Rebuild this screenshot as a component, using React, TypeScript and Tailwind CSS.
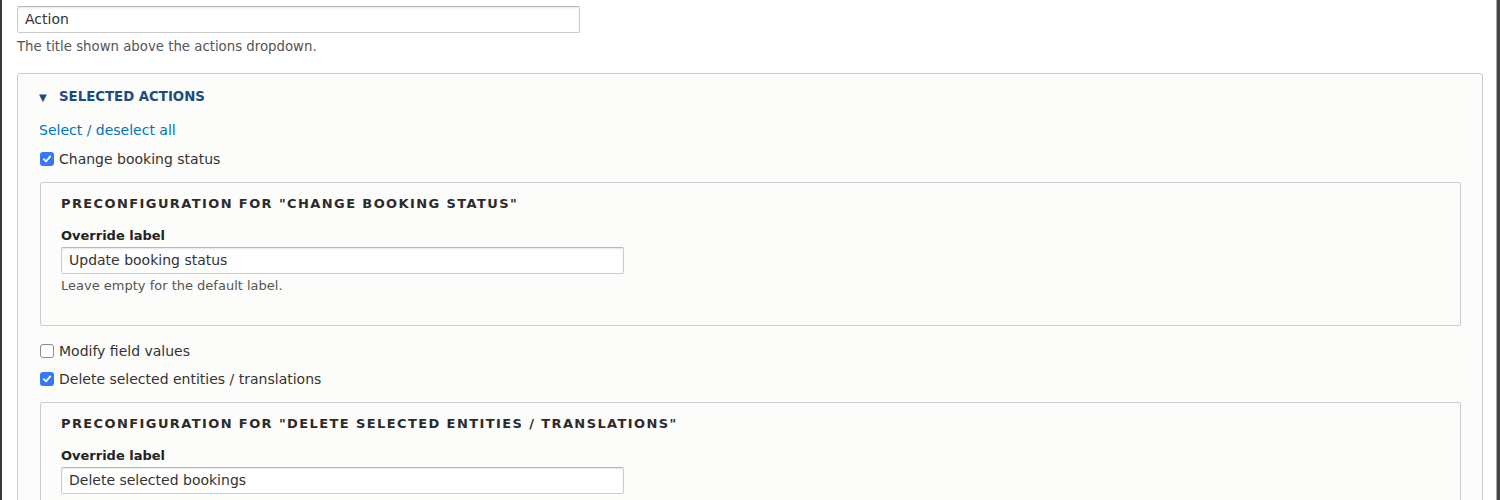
const font = { fontFamily: '"DejaVu Sans", "Liberation Sans", sans-serif' };

function TextInput({ value, className = "" }: { value: string; className?: string }) {
  return (
    <div
      className={`h-[27px] flex items-center px-[7px] bg-white border border-[#ccc] border-t-[#b8b8b8] rounded-[2px] shadow-[inset_0_1px_2px_rgba(0,0,0,0.1)] text-[14px] text-[#333] ${className}`}
    >
      {value}
    </div>
  );
}

function Check({ checked, label }: { checked: boolean; label: string }) {
  return (
    <label className="flex items-center h-[20px] text-[14px] text-[#333]">
      {checked ? (
        <span className="w-[14px] h-[14px] ml-[1px] mr-[5px] rounded-[3px] bg-[#3478f6] flex items-center justify-center">
          <svg width="10" height="10" viewBox="0 0 10 10">
            <path d="M1.8 5.2 L4 7.4 L8.3 2.4" stroke="white" strokeWidth="1.8" fill="none" strokeLinecap="round" strokeLinejoin="round" />
          </svg>
        </span>
      ) : (
        <span className="w-[14px] h-[14px] ml-[1px] mr-[5px] rounded-[3px] bg-white border border-[#8a8a8a]" />
      )}
      {label}
    </label>
  );
}

function Preconfig({ title, value }: { title: string; value: string }) {
  return (
    <div className="border border-[#ccc] rounded-[2px] bg-[#fcfcfa] pl-[20px] pr-[20px] pt-[12px] pb-[31px]">
      <div className="h-[18px] leading-[18px] text-[13px] font-bold uppercase tracking-[1.4px] text-[#2b2b2b]">{title}</div>
      <div className="mt-[14px] h-[18px] leading-[18px] text-[13px] font-bold text-[#222]">Override label</div>
      <TextInput value={value} className="mt-[2px] w-[563px]" />
      <div className="mt-[4px] h-[16px] leading-[16px] text-[13px] text-[#555]">Leave empty for the default label.</div>
    </div>
  );
}

export default function App() {
  return (
    <div className="flex h-[500px] overflow-hidden bg-white" style={font}>
      <div className="w-[2px] bg-[#3a3a3a]" />
      <main className="flex-1 pl-[15px] pr-[13px] pt-[6px]">
        <TextInput value="Action" className="w-[563px]" />
        <p className="mt-[5px] leading-[18px] text-[13.3px] text-[#555]">The title shown above the actions dropdown.</p>

        <section className="mt-[17px] border border-[#ccc] rounded-[3px] bg-[#fcfcfa] pl-[22px] pr-[21px] pt-[13px] pb-[40px]">
          <div className="flex items-center h-[20px] text-[13.3px] font-bold uppercase text-[#1d4d80]">
            <span className="text-[10px] w-[20px] -ml-[1px]">▼</span>
            Selected actions
          </div>
          <a className="mt-[13px] -ml-[1px] block h-[20px] leading-[20px] text-[14px] text-[#0074bd]">Select / deselect all</a>
          <div className="mt-[9px] -ml-[1px]">
            <Check checked label="Change booking status" />
          </div>
          <div className="mt-[13px]">
            <Preconfig title={'Preconfiguration for "Change booking status"'} value="Update booking status" />
          </div>
          <div className="mt-[15px] -ml-[1px]">
            <Check checked={false} label="Modify field values" />
          </div>
          <div className="mt-[8px] -ml-[1px]">
            <Check checked label="Delete selected entities / translations" />
          </div>
          <div className="mt-[13px]">
            <Preconfig title={'Preconfiguration for "Delete selected entities / translations"'} value="Delete selected bookings" />
          </div>
        </section>
      </main>
      <div className="w-[1px] bg-[#a8a8a8]" />
      <div className="w-[3px] bg-[#444]" />
    </div>
  );
}
